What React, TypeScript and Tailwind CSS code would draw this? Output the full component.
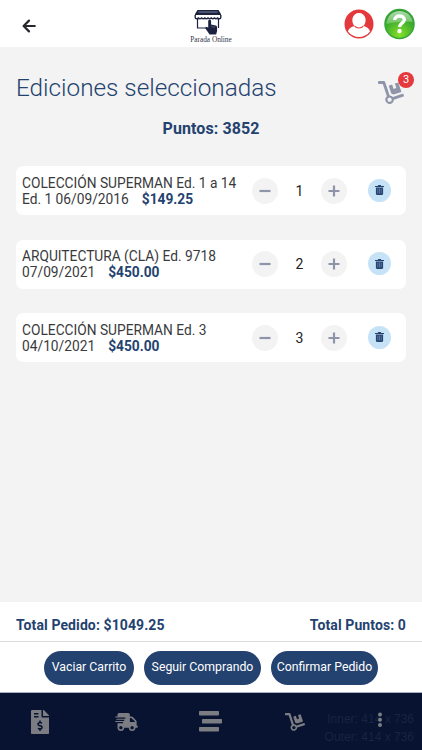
import { useState } from 'react'
import { FaDolly, FaFileInvoiceDollar, FaShippingFast } from 'react-icons/fa'

const initialItems = [
  { id: 1, title: 'COLECCIÓN SUPERMAN Ed. 1 a 14', detail: 'Ed. 1 06/09/2016', price: '$149.25', qty: 1 },
  { id: 2, title: 'ARQUITECTURA (CLA) Ed. 9718', detail: '07/09/2021', price: '$450.00', qty: 2 },
  { id: 3, title: 'COLECCIÓN SUPERMAN Ed. 3', detail: '04/10/2021', price: '$450.00', qty: 3 },
]

function BackIcon() {
  return (
    <svg width="14" height="14" viewBox="0 0 14 14" fill="none" stroke="#26282b" strokeWidth="2.2" strokeLinecap="round" strokeLinejoin="round">
      <path d="M7 1.6 1.6 7 7 12.4M1.8 7h11" />
    </svg>
  )
}

function Logo() {
  return (
    <div className="flex flex-col items-center">
      <svg width="28" height="26" viewBox="0 0 28 26" className="-translate-x-[3px]">
        <path d="M3.500 1h21l2.500 4v1.500H1V5z" fill="#1b2340" />
        <path d="M4.500 3h19" stroke="#7b829a" strokeWidth="1" />
        <path d="M1.200 6v2.200a1.600 1.600 0 0 0 3.200 0 1.600 1.600 0 0 0 3.200 0 1.600 1.600 0 0 0 3.200 0 1.600 1.600 0 0 0 3.200 0 1.600 1.600 0 0 0 3.200 0 1.600 1.600 0 0 0 3.200 0 1.600 1.600 0 0 0 3.200 0 1.600 1.600 0 0 0 3.200 0V6" fill="#fff" stroke="#1b2340" strokeWidth="1.400" />
        <path d="M3.500 10v9h10M24.500 10v9" fill="none" stroke="#1b2340" strokeWidth="1.200" />
        <path d="M14.200 12.200c0-1.900 2.900-1.900 2.900 0v3.300l4.600 1.100c1 .3 1.400 1 1.400 2v3.300l-1 3.600h-6.500l-4-5.800c-.9-1.600 1.400-2.300 2.600-.9z" fill="#1b2340" />
        <path d="M18 16.500v2M20 17v2" stroke="#737991" strokeWidth=".6" />
      </svg>
      <span className="-mt-[0.500px] font-['Liberation_Serif',serif] text-[7.300px] leading-[9px] whitespace-nowrap text-[#34384a]">Parada Online</span>
    </div>
  )
}

function UserIcon() {
  return (
    <svg width="30" height="30" viewBox="0 0 30 30">
      <circle cx="15" cy="15" r="14.500" fill="#e3383c" />
      <path d="M4 22.500c1-3.500 3.500-4.500 6.600-5.400C6.300 12.500 8.300 4 15 4s8.700 8.500 4.400 13.100c3.100.9 5.600 1.900 6.600 5.400C20.500 29.800 9.500 29.800 4 22.500z" fill="#fff" />
      <path d="M10.600 17.100c2.400 2.500 6.400 2.500 8.800 0" fill="none" stroke="#e3383c" strokeWidth="1.200" />
    </svg>
  )
}

function HelpIcon() {
  return (
    <svg width="31" height="32" viewBox="0 0 31 32">
      <defs>
        <radialGradient id="help" cx=".5" cy=".85" r=".85">
          <stop offset="0" stopColor="#86e02c" />
          <stop offset=".6" stopColor="#3fae2c" />
          <stop offset="1" stopColor="#2c9a2d" />
        </radialGradient>
        <linearGradient id="gloss" x1="0" y1="0" x2="0" y2="1">
          <stop offset="0" stopColor="#fff" stopOpacity=".6" />
          <stop offset="1" stopColor="#fff" stopOpacity=".25" />
        </linearGradient>
      </defs>
      <circle cx="15.500" cy="16" r="14.600" fill="url(#help)" stroke="#35a336" strokeWidth="1.300" />
      <path d="M2.500 16C3 8 8.500 3 15.500 3S28 8 28.500 14C20 13 10 14 2.500 16z" fill="url(#gloss)" />
      <path d="M10.700 12c0-5.300 9.600-5.300 9.600-.3 0 3.400-4.800 3.300-4.800 7.200" fill="none" stroke="#fff" strokeWidth="3.400" />
      <circle cx="15.500" cy="23" r="2.200" fill="#fff" />
    </svg>
  )
}

function TrashIcon() {
  return (
    <svg width="9" height="10" viewBox="0 0 9 10">
      <path d="M0 .9h2.700L3.300.1h2.400l.6.800H9v1H0z" fill="#24426f" />
      <path d="M.9 2.500h7.200v6.300c0 .7-.4 1.100-1.100 1.100H2c-.7 0-1.100-.4-1.100-1.100z" fill="#24426f" />
      <path d="M2.800 3.500v5M4.500 3.500v5M6.200 3.500v5" stroke="#7d9abc" strokeWidth=".6" />
    </svg>
  )
}

function StepButton({ sign, onClick }: { sign: 'minus' | 'plus'; onClick: () => void }) {
  return (
    <button onClick={onClick} className="flex size-[26px] items-center justify-center rounded-full bg-[#f3f3f4]">
      <svg width="12" height="12" viewBox="0 0 12 12" stroke="#8e95a9" strokeWidth="2.2">
        <path d={sign === 'plus' ? 'M.5 6h11M6 .5v11' : 'M.5 6h11'} />
      </svg>
    </button>
  )
}

export default function App() {
  const [items, setItems] = useState(initialItems)

  const changeQty = (id: number, delta: number) =>
    setItems(items.map((item) => (item.id === id ? { ...item, qty: Math.max(1, item.qty + delta) } : item)))

  return (
    <div className="flex h-[750px] w-[422px] flex-col overflow-hidden bg-[#f3f3f3] font-[Roboto,sans-serif] text-[#24426f]">
      {/* Header */}
      <header className="grid h-[47px] shrink-0 grid-cols-3 bg-white">
        <button className="mt-[19px] ml-[22px] size-[14px]"><BackIcon /></button>
        <div className="pt-[9px]"><Logo /></div>
        <div className="flex items-start justify-end gap-[10px] pt-[8px] pr-[7px]">
          <div className="pt-px"><UserIcon /></div>
          <HelpIcon />
        </div>
      </header>

      <main className="flex-1 px-4">
        <div className="flex h-[63px] items-start justify-between pt-[24px]">
          <h1 className="text-[24.300px] leading-[34px] font-light whitespace-nowrap">Ediciones seleccionadas</h1>
          <div className="relative mt-[10px] mr-[2px]">
            <FaDolly className="h-[23px] w-[26px] text-[#8e95a9]" />
            <span className="absolute -top-[9px] -right-[10px] flex size-4 items-center justify-center rounded-full bg-[#e5393d] text-[11px] text-white">3</span>
          </div>
        </div>
        <p className="mt-[8px] text-center text-base leading-[21px] font-bold tracking-[0.080px]">Puntos: 3852</p>

        {/* Selected editions */}
        <ul className="mt-[27px] flex flex-col gap-[24.500px]">
          {items.map((item) => (
            <li key={item.id} className="flex h-[49px] items-center rounded-[7px] bg-white pr-[15px] pl-[6px]">
              <div className="flex-1 text-[13.750px] leading-[16px] whitespace-nowrap text-[#3a3a3c]">
                <p>{item.title}</p>
                <p>
                  {item.detail}
                  <b className="ml-[13px] text-[#24426f]">{item.price}</b>
                </p>
              </div>
              <StepButton sign="minus" onClick={() => changeQty(item.id, -1)} />
              <span className="w-[43px] pt-px text-center text-[14px] text-[#222]">{item.qty}</span>
              <StepButton sign="plus" onClick={() => changeQty(item.id, 1)} />
              <button
                onClick={() => setItems(items.filter((i) => i.id !== item.id))}
                className="mb-px ml-[21px] flex size-[23px] items-center justify-center rounded-full bg-[#c6e2f7]"
              >
                <TrashIcon />
              </button>
            </li>
          ))}
        </ul>
      </main>

      {/* Totals */}
      <section className="flex h-[40px] shrink-0 items-center justify-between border-b border-[#dcdcde] bg-white px-4 pt-[7px] text-[14px] font-bold tracking-[0.100px]">
        <span>Total Pedido: $1049.25</span>
        <span>Total Puntos: 0</span>
      </section>

      {/* Actions */}
      <section className="flex h-[50px] shrink-0 items-start justify-center gap-[10px] bg-white pt-[9px] text-[12.300px] text-white">
        <button className="h-[34px] w-[90px] rounded-full bg-[#24426f] pb-px">Vaciar Carrito</button>
        <button className="h-[34px] w-[117px] rounded-full bg-[#24426f] pb-px">Seguir Comprando</button>
        <button className="h-[34px] w-[107px] rounded-full bg-[#24426f] pb-px">Confirmar Pedido</button>
      </section>

      {/* Bottom bar */}
      <nav className="relative grid h-[58px] shrink-0 grid-cols-5 border-t border-[#a9b0c0] bg-[#071331] text-[#7b7d82]">
        <div className="absolute right-[8px] bottom-[4px] text-right font-['Liberation_Sans',sans-serif] text-[12px] leading-[18px] text-[#182440]">
          <p>Inner: 414 x 736</p>
          <p>Outer: 414 x 736</p>
        </div>
        <div className="relative flex justify-center pt-[17px] pr-[5px]"><FaFileInvoiceDollar className="h-[24px] w-[18px]" /></div>
        <div className="relative flex justify-center pt-[20px]"><FaShippingFast className="h-[18px] w-[23px]" /></div>
        <div className="relative flex justify-center pt-[18px]">
          <svg width="23" height="21" viewBox="0 0 23 21" fill="currentColor">
            <rect x="0" y="0" width="20" height="4.500" rx=".7" />
            <rect x="3" y="8" width="20" height="4.500" rx=".7" />
            <rect x="0" y="16" width="20" height="4.500" rx=".7" />
          </svg>
        </div>
        <div className="relative flex justify-center pt-[20px]"><FaDolly className="h-[18px] w-[20px]" /></div>
        <div className="relative flex justify-center pt-[19px]">
          <svg width="4" height="16" viewBox="0 0 4 16" fill="currentColor">
            <circle cx="2" cy="2.500" r="2" />
            <circle cx="2" cy="7.700" r="2" />
            <circle cx="2" cy="12.900" r="2" />
          </svg>
        </div>
      </nav>
    </div>
  )
}
